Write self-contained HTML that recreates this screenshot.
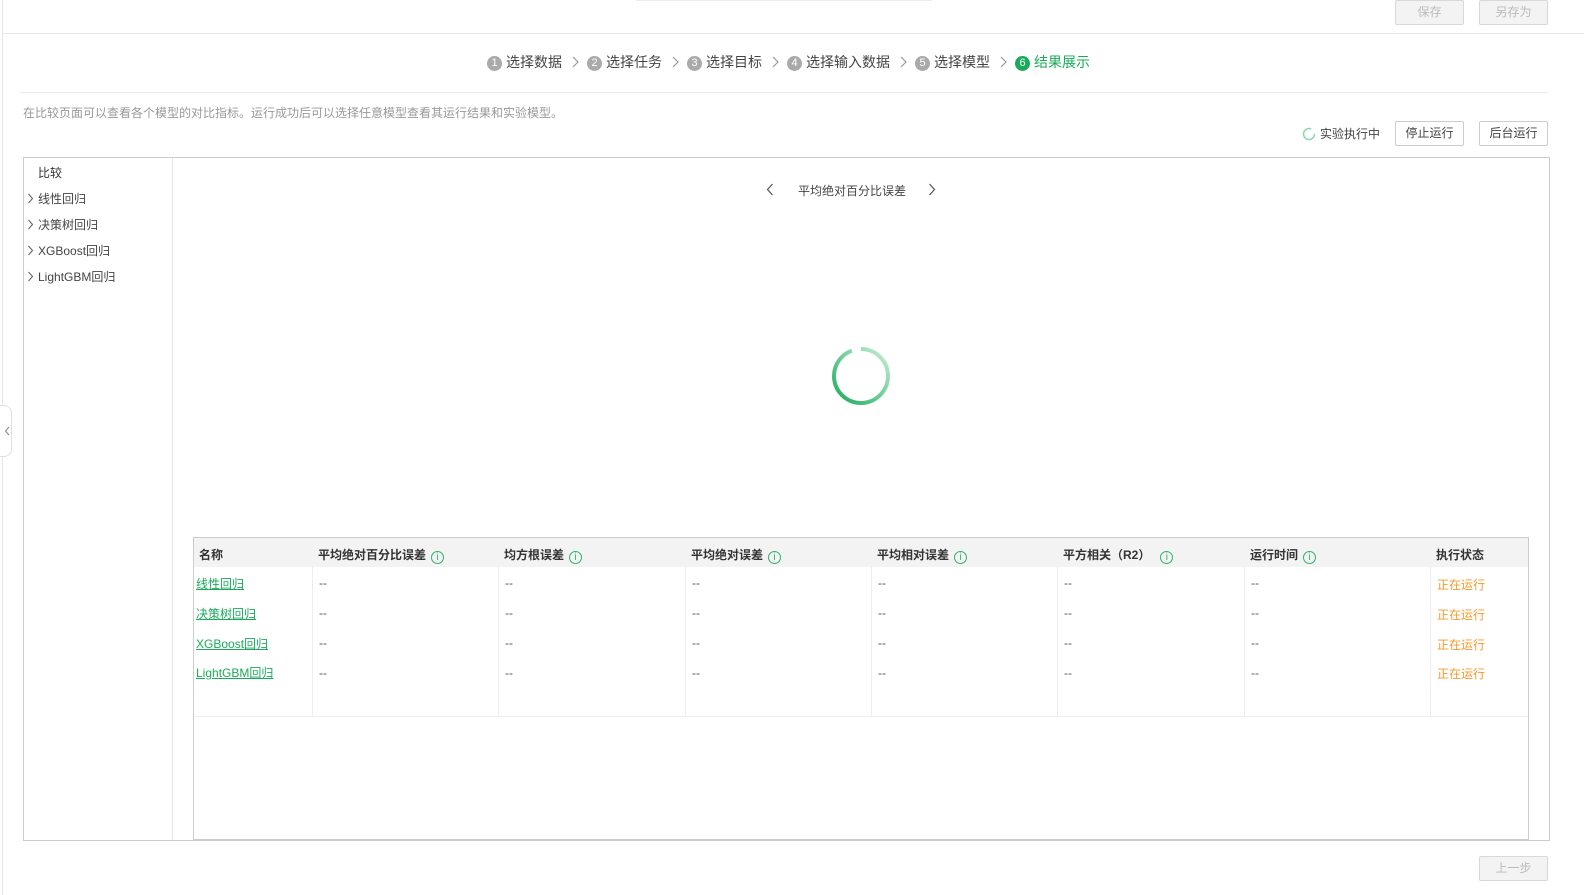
<!DOCTYPE html>
<html><head><meta charset="utf-8"><style>
*{margin:0;padding:0;box-sizing:border-box}
body{width:1584px;height:895px;background:#fff;position:relative;overflow:hidden;font-family:"Liberation Sans","Noto Sans CJK SC",sans-serif;font-size:12px;color:#333}
.a{position:absolute;white-space:nowrap}
.btn{position:absolute;border:1px solid #ccc;border-radius:2px;text-align:center;font-size:12px;line-height:23px;height:25px;width:69px}
.dis{background:#f3f3f3;color:#bbb;border-color:#d8d8d8}
.num{display:inline-block;width:15px;height:15px;border-radius:50%;background:#aaa;color:#fff;font-size:11px;line-height:15px;text-align:center;vertical-align:1px;margin-right:4px}
.st{font-size:14px;color:#444}
.chev{display:inline-block;width:10px;height:12px;margin:0 7px 0 8px;vertical-align:-1px}
.th{position:absolute;top:546px;font-size:12px;color:#333;font-weight:bold}
.ic{display:inline-block;width:13px;height:13px;border:1px solid #2db36a;border-radius:50%;color:#2db36a;font-size:10px;line-height:11px;text-align:center;font-weight:normal;margin-left:5px;vertical-align:-1px}
.td{position:absolute;color:#555}
.lk{position:absolute;color:#1aab5a;text-decoration:underline}
.or{position:absolute;color:#f39a2b}
.vl{position:absolute;top:567px;height:149px;width:1px;background:#eee}
.sc{display:inline-block;width:7px;height:11px;margin-right:4px;vertical-align:-1px}
</style></head><body>
<svg width="0" height="0" style="position:absolute"><defs><symbol id="cv" viewBox="0 0 10 12"><path d="M3 1 L8 6 L3 11" fill="none" stroke="#999" stroke-width="1.2"/></symbol><symbol id="sv" viewBox="0 0 7 11"><path d="M1.5 1 L5.5 5.5 L1.5 10" fill="none" stroke="#666" stroke-width="1.1"/></symbol></defs></svg>
<div class="a" style="left:2px;top:0;width:1px;height:895px;background:#e6e6e6"></div>
<div class="a" style="left:3px;top:33px;width:1581px;height:1px;background:#e8e8e8"></div>
<div class="a" style="left:636px;top:0;width:296px;height:1px;background:#eee"></div>
<div class="btn dis" style="left:1395px;top:0">保存</div>
<div class="btn dis" style="left:1479px;top:0">另存为</div>

<div class="a" style="left:487px;top:53px;line-height:18px">
<span class="num">1</span><span class="st">选择数据</span><svg class="chev"><use href="#cv"/></svg><span class="num">2</span><span class="st">选择任务</span><svg class="chev"><use href="#cv"/></svg><span class="num">3</span><span class="st">选择目标</span><svg class="chev"><use href="#cv"/></svg><span class="num">4</span><span class="st">选择输入数据</span><svg class="chev"><use href="#cv"/></svg><span class="num">5</span><span class="st">选择模型</span><svg class="chev"><use href="#cv"/></svg><span class="num" style="background:#1aab5a">6</span><span class="st" style="color:#1aab5a">结果展示</span>
</div>
<div class="a" style="left:20px;top:92px;width:1528px;height:1px;background:#ececec"></div>
<div class="a" style="left:23px;top:104px;color:#999;font-size:12px">在比较页面可以查看各个模型的对比指标。运行成功后可以选择任意模型查看其运行结果和实验模型。</div>

<svg class="a" style="left:1302px;top:127px" width="14" height="14" viewBox="0 0 14 14"><circle cx="7" cy="7" r="5.5" fill="none" stroke="#8fd9ae" stroke-width="1.6" stroke-dasharray="28 8"/></svg>
<div class="a" style="left:1320px;top:125px;color:#444">实验执行中</div>
<div class="btn" style="left:1395px;top:121px;color:#444">停止运行</div>
<div class="btn" style="left:1479px;top:121px;color:#444">后台运行</div>

<div class="a" style="left:23px;top:157px;width:1527px;height:684px;border:1px solid #ccc"></div>
<div class="a" style="left:172px;top:158px;width:1px;height:682px;background:#e6e6e6"></div>
<div class="a" style="left:0;top:405px;width:12px;height:52px;border:1px solid #e0e0e0;border-left:none;border-radius:0 8px 8px 0;background:#fff"></div>
<svg class="a" style="left:4px;top:426px" width="6" height="10" viewBox="0 0 6 10"><path d="M5 1 L1.5 5 L5 9" fill="none" stroke="#888" stroke-width="1"/></svg>
<div class="a" style="left:38px;top:164px;color:#333">比较</div>
<div class="a" style="left:27px;top:190px;color:#444"><svg class="sc"><use href="#sv"/></svg>线性回归</div>
<div class="a" style="left:27px;top:216px;color:#444"><svg class="sc"><use href="#sv"/></svg>决策树回归</div>
<div class="a" style="left:27px;top:242px;color:#444"><svg class="sc"><use href="#sv"/></svg>XGBoost回归</div>
<div class="a" style="left:27px;top:268px;color:#444"><svg class="sc"><use href="#sv"/></svg>LightGBM回归</div>

<svg class="a" style="left:766px;top:183px" width="8" height="13" viewBox="0 0 8 13"><path d="M6.5 1 L1.5 6.5 L6.5 12" fill="none" stroke="#555" stroke-width="1.2"/></svg>
<div class="a" style="left:798px;top:182px;color:#444">平均绝对百分比误差</div>
<svg class="a" style="left:928px;top:183px" width="8" height="13" viewBox="0 0 8 13"><path d="M1.5 1 L6.5 6.5 L1.5 12" fill="none" stroke="#555" stroke-width="1.2"/></svg>

<svg class="a" style="left:830px;top:345px" width="62" height="62" viewBox="0 0 62 62">
<defs><linearGradient id="g" x1="0" y1="0" x2="1" y2="1"><stop offset="0" stop-color="#1aab5a"/><stop offset="1" stop-color="#c8efd8"/></linearGradient></defs>
<circle cx="31" cy="31" r="27" fill="none" stroke="url(#g)" stroke-width="4" stroke-dasharray="160 10" transform="rotate(-90 31 31)"/>
</svg>

<div class="a" style="left:193px;top:537px;width:1336px;height:303px;border:1px solid #ccc"></div>
<div class="a" style="left:194px;top:538px;width:1334px;height:29px;background:#f3f3f3"></div>
<div class="a" style="left:194px;top:716px;width:1334px;height:1px;background:#eee"></div>
<div class="vl" style="left:312px"></div><div class="vl" style="left:498px"></div><div class="vl" style="left:685px"></div><div class="vl" style="left:871px"></div><div class="vl" style="left:1057px"></div><div class="vl" style="left:1244px"></div><div class="vl" style="left:1430px"></div>
<div class="th" style="left:199px">名称</div>
<div class="th" style="left:318px">平均绝对百分比误差<span class="ic">i</span></div>
<div class="th" style="left:504px">均方根误差<span class="ic">i</span></div>
<div class="th" style="left:691px">平均绝对误差<span class="ic">i</span></div>
<div class="th" style="left:877px">平均相对误差<span class="ic">i</span></div>
<div class="th" style="left:1063px">平方相关（R2）<span class="ic" style="margin-left:10px">i</span></div>
<div class="th" style="left:1250px">运行时间<span class="ic">i</span></div>
<div class="th" style="left:1436px">执行状态</div>

<div class="lk" style="left:196px;top:575px">线性回归</div>
<div class="lk" style="left:196px;top:605px">决策树回归</div>
<div class="lk" style="left:196px;top:635px">XGBoost回归</div>
<div class="lk" style="left:196px;top:664px">LightGBM回归</div>
<div class="td" style="left:319px;top:576px;line-height:15px">--<br><br>--<br><br>--<br><br>--</div>
<div class="td" style="left:505px;top:576px;line-height:15px">--<br><br>--<br><br>--<br><br>--</div>
<div class="td" style="left:692px;top:576px;line-height:15px">--<br><br>--<br><br>--<br><br>--</div>
<div class="td" style="left:878px;top:576px;line-height:15px">--<br><br>--<br><br>--<br><br>--</div>
<div class="td" style="left:1064px;top:576px;line-height:15px">--<br><br>--<br><br>--<br><br>--</div>
<div class="td" style="left:1251px;top:576px;line-height:15px">--<br><br>--<br><br>--<br><br>--</div>
<div class="or" style="left:1437px;top:576px">正在运行</div>
<div class="or" style="left:1437px;top:606px">正在运行</div>
<div class="or" style="left:1437px;top:636px">正在运行</div>
<div class="or" style="left:1437px;top:665px">正在运行</div>

<div class="btn dis" style="left:1479px;top:856px">上一步</div>
</body></html>
